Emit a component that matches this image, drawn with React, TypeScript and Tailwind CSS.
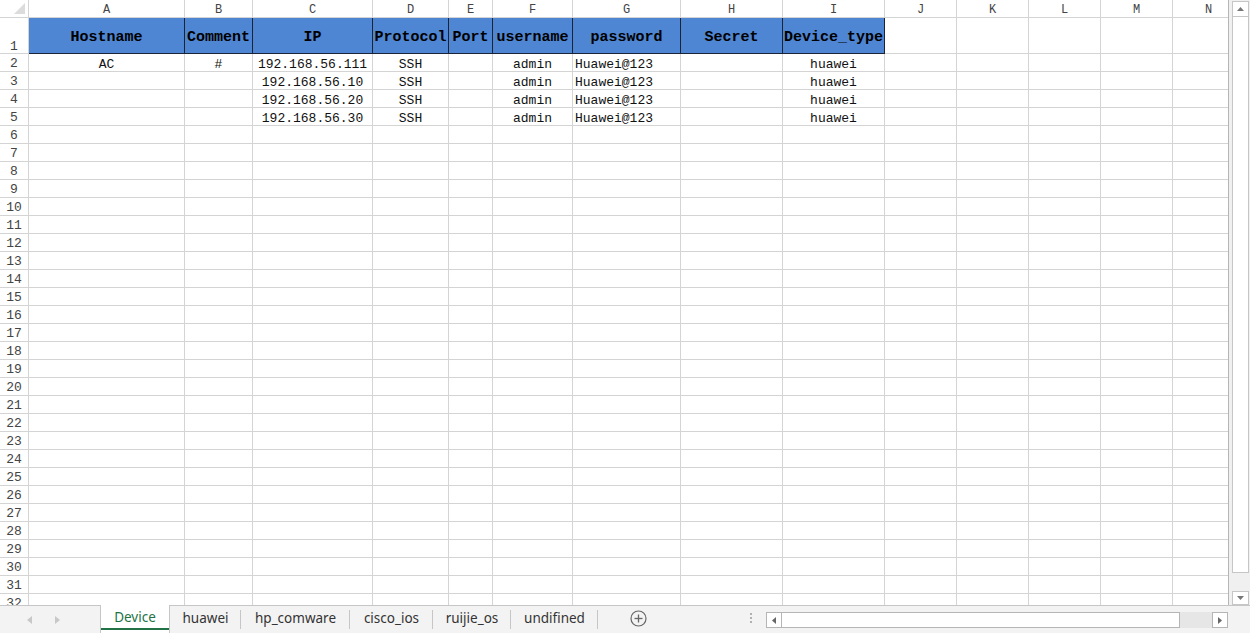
import React from "react";

const colWidths = [156, 68, 120, 76, 44, 80, 108, 102, 102, 72, 72, 72, 72, 72];
const letters = ["A", "B", "C", "D", "E", "F", "G", "H", "I", "J", "K", "L", "M", "N"];
const headers = ["Hostname", "Comment", "IP", "Protocol", "Port", "username", "password", "Secret", "Device_type"];
const align = ["center", "center", "center", "center", "center", "center", "left", "center", "center", "center", "center", "center", "center", "center"];

const data: string[][] = [
  ["AC", "#", "192.168.56.111", "SSH", "", "admin", "Huawei@123", "", "huawei"],
  ["", "", "192.168.56.10", "SSH", "", "admin", "Huawei@123", "", "huawei"],
  ["", "", "192.168.56.20", "SSH", "", "admin", "Huawei@123", "", "huawei"],
  ["", "", "192.168.56.30", "SSH", "", "admin", "Huawei@123", "", "huawei"],
];

const mono = { fontFamily: '"Liberation Mono", "DejaVu Sans Mono", monospace' };

function DataCell({ text, a }: { text: string; a: string }) {
  return (
    <div
      className={
        "h-[18px] shrink-0 border-r border-b border-[#d4d4d4] flex items-end overflow-visible whitespace-nowrap text-[13px] leading-[15px] text-[#111] " +
        (a === "left" ? "justify-start pl-[2px]" : "justify-center")
      }
    >
      <span className="translate-y-[1px]">{text}</span>
    </div>
  );
}

function Sheet() {
  const rows: React.ReactNode[] = [];
  for (let r = 2; r <= 32; r++) {
    const d = data[r - 2];
    rows.push(
      <div key={r} className="flex">
        <div className="w-[29px] h-[18px] shrink-0 border-r border-b border-[#d4d4d4] flex items-center justify-center pt-[3px] text-[13px] text-[#444]">
          {r}
        </div>
        {colWidths.map((w, i) => (
          <div key={i} style={{ width: w }} className="shrink-0">
            <DataCell text={d && i < d.length ? d[i] : ""} a={align[i]} />
          </div>
        ))}
      </div>
    );
  }
  return (
    <div className="w-[1229px] h-[605px] overflow-hidden border-r border-[#b5b5b5] bg-white" style={mono}>
      <div className="w-[1400px]">
        {/* column letters */}
        <div className="flex">
          <div className="relative w-[29px] h-[18px] shrink-0 border-r border-b border-[#d4d4d4]">
            <svg className="absolute left-[14px] top-[3px]" width="11" height="11" viewBox="0 0 11 11">
              <polygon points="11,0 11,11 0,11" fill="#dcdcdc" />
            </svg>
          </div>
          {colWidths.map((w, i) => (
            <div
              key={i}
              style={{ width: w }}
              className="h-[18px] shrink-0 border-r border-b border-[#d4d4d4] flex items-center justify-center pt-[3px] text-[12px] text-[#444]"
            >
              {letters[i]}
            </div>
          ))}
        </div>
        {/* header row 1 */}
        <div className="flex">
          <div className="w-[29px] h-[36px] shrink-0 border-r border-b border-[#d4d4d4] flex items-end justify-center text-[13px] leading-[15px] text-[#444]">
            <span className="translate-y-[1px]">1</span>
          </div>
          {colWidths.map((w, i) =>
            i < headers.length ? (
              <div
                key={i}
                style={{ width: w }}
                className="h-[36px] shrink-0 bg-[#4f86d3] border-r border-b border-[#1a2436] flex items-center justify-center pt-[6px] text-[15px] font-bold text-black whitespace-nowrap"
              >
                {headers[i]}
              </div>
            ) : (
              <div key={i} style={{ width: w }} className="h-[36px] shrink-0 border-r border-b border-[#d4d4d4]" />
            )
          )}
        </div>
        {rows}
      </div>
    </div>
  );
}

function VScroll() {
  return (
    <div className="w-[21px] h-[605px] bg-[#f0f0f0] flex flex-col items-center pt-[1px] pl-[1px]">
      <div className="w-[17px] h-[16px] bg-white border border-[#c6c6c6] flex items-center justify-center">
        <svg width="7" height="4" viewBox="0 0 7 4">
          <polygon points="0,4 7,4 3.5,0" fill="#777" />
        </svg>
      </div>
      <div className="w-[17px] h-[556px] bg-white border border-[#c6c6c6] border-t-0" />
      <div className="flex-1" />
      <div className="w-[17px] h-[14px] bg-white border border-[#c6c6c6] flex items-center justify-center">
        <svg width="7" height="4" viewBox="0 0 7 4">
          <polygon points="0,0 7,0 3.5,4" fill="#777" />
        </svg>
      </div>
    </div>
  );
}

const tabs = ["huawei", "hp_comware", "cisco_ios", "ruijie_os", "undifined"];
const tabWidths = [71, 109, 83, 78, 87];

function TabBar() {
  return (
    <div
      className="h-[28px] w-[1250px] bg-[#f3f3f3] border-t border-[#c6c6c6] flex items-stretch"
      style={{ fontFamily: '"Noto Sans", "Open Sans", sans-serif' }}
    >
      <div className="w-[100px] shrink-0 flex items-center">
        <svg className="ml-[27px]" width="5" height="8" viewBox="0 0 5 8">
          <polygon points="5,0 5,8 0,4" fill="#c8c8c8" />
        </svg>
        <svg className="ml-[23px]" width="5" height="8" viewBox="0 0 5 8">
          <polygon points="0,0 0,8 5,4" fill="#c8c8c8" />
        </svg>
      </div>
      <div className="w-[70px] shrink-0 bg-white border-l border-r border-[#c6c6c6] -mt-[1px] relative flex items-center justify-center text-[13.5px] text-[#217346]">
        <span className="-mt-[3px]">Device</span>
        <div className="absolute left-0 right-0 bottom-[3px] h-[2px] bg-[#217346]" />
      </div>
      {tabs.map((t, i) => (
        <div
          key={t}
          style={{ width: tabWidths[i] }}
          className="shrink-0 relative flex items-center justify-center text-[13.5px] text-[#333]"
        >
          <span className="-mt-[3px]">{t}</span>
          <div className="absolute right-0 top-[4px] h-[19px] w-[1px] bg-[#c6c6c6]" />
        </div>
      ))}
      <div className="w-[32px] shrink-0" />
      <div className="flex items-center">
        <svg width="17" height="17" viewBox="0 0 17 17" className="-mt-[3px]">
          <circle cx="8.5" cy="8.5" r="7.5" fill="none" stroke="#666" strokeWidth="1.2" />
          <line x1="8.5" y1="4.5" x2="8.5" y2="12.5" stroke="#666" strokeWidth="1.3" />
          <line x1="4.5" y1="8.5" x2="12.5" y2="8.5" stroke="#666" strokeWidth="1.3" />
        </svg>
      </div>
      <div className="w-[110px] shrink-0 flex items-center justify-end">
        <div className="flex flex-col gap-[2px] -mt-[3px] mr-[5px]">
          <div className="w-[2px] h-[2px] bg-[#b0b0b0]" />
          <div className="w-[2px] h-[2px] bg-[#b0b0b0]" />
          <div className="w-[2px] h-[2px] bg-[#b0b0b0]" />
        </div>
      </div>
      <div className="ml-[9px] mt-[6px] h-[16px] w-[462px] flex">
        <div className="w-[16px] h-[16px] bg-white border border-[#b5b5b5] flex items-center justify-center">
          <svg width="4" height="7" viewBox="0 0 4 7">
            <polygon points="4,0 4,7 0,3.5" fill="#666" />
          </svg>
        </div>
        <div className="w-[398px] h-[16px] bg-white border border-l-0 border-[#b5b5b5]" />
        <div className="w-[32px] h-[16px] bg-[#e6e6e6]" />
        <div className="w-[16px] h-[16px] bg-white border border-[#b5b5b5] flex items-center justify-center">
          <svg width="4" height="7" viewBox="0 0 4 7">
            <polygon points="0,0 0,7 4,3.5" fill="#666" />
          </svg>
        </div>
      </div>
    </div>
  );
}

export default function App() {
  return (
    <div className="w-[1250px] h-[633px] overflow-hidden bg-white flex flex-col">
      <div className="flex h-[605px]">
        <Sheet />
        <VScroll />
      </div>
      <TabBar />
    </div>
  );
}
